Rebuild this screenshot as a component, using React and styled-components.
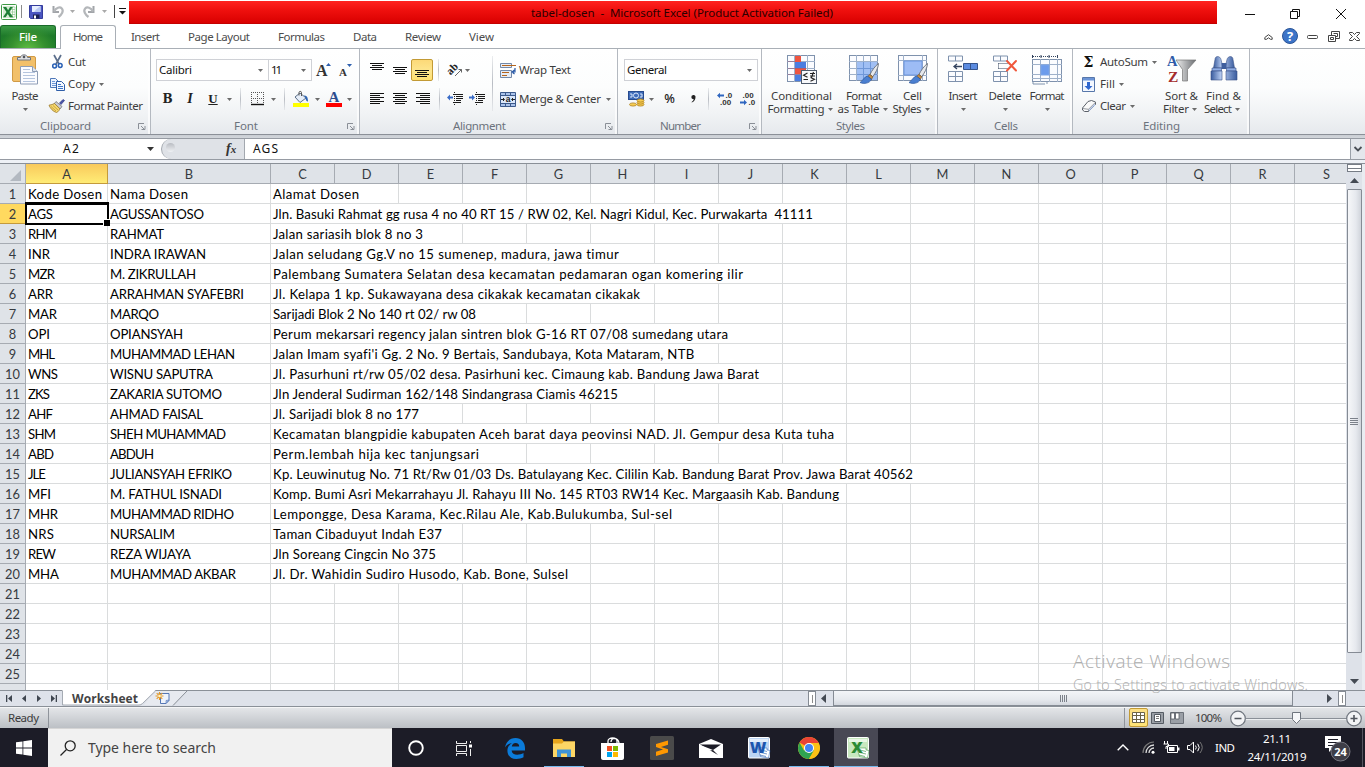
import React, { useLayoutEffect, useRef, useState } from "react";
import styled, { createGlobalStyle, css } from "styled-components";

const UI = `"Noto Sans", "Open Sans", sans-serif`;
const SHEET = `Lato, "Liberation Sans", sans-serif`;

const GlobalStyle = createGlobalStyle`
  * { box-sizing: border-box; }
  body { margin: 0; overflow: hidden; background: #fff; font: 11.5px/16px ${UI}; color: #3c3c3c; }
`;

/* ---------- text set to an exact measure ---------- */

const Measure = styled.span`
  display: block;
  flex: none;
  width: ${(p) => p.$w}px;
  white-space: pre;
  & > span { display: inline-block; }
`;

function Text({ w, children, className }) {
  const ref = useRef(null);
  const [spacing, setSpacing] = useState(0);
  useLayoutEffect(() => {
    const el = ref.current;
    el.style.letterSpacing = "0px";
    const natural = el.getBoundingClientRect().width;
    const next = (w - natural) / Math.max(children.length - 1, 1);
    el.style.letterSpacing = `${next}px`;
    setSpacing(next);
  }, [w, children]);
  return (
    <Measure $w={w} className={className}>
      <span ref={ref} style={{ letterSpacing: `${spacing}px` }}>{children}</span>
    </Measure>
  );
}

/* ---------- shared parts ---------- */

const Icon = styled.svg`
  display: block;
  flex: none;
  overflow: visible;
`;

const Slot = styled.div`
  flex: none;
  width: ${(p) => p.$w}px;
  height: 22px;
  display: flex;
  align-items: center;
  justify-content: center;
`;

const Spacer = styled.div`
  flex: ${(p) => (p.$w ? "none" : "1")};
  width: ${(p) => p.$w || 0}px;
`;

const ArrowBox = styled(Slot)`
  height: auto;
`;

const Arrow = ({ w = 9, color = "#6b6b6b" }) => (
  <ArrowBox $w={w}>
    <Icon width="5" height="3" viewBox="0 0 5 3"><path d="M0 0h5L2.5 3z" fill={color} /></Icon>
  </ArrowBox>
);

const Screen = styled.div`
  width: 1365px;
  height: 767px;
  display: flex;
  flex-direction: column;
  overflow: hidden;
`;

/* ---------- title bar ---------- */

const TitleBar = styled.header`
  display: flex;
  flex: none;
  height: 25px;
`;

const QuickAccess = styled.div`
  display: flex;
  align-items: center;
  width: 129px;
  height: 23px;
`;

const TitleBand = styled.div`
  width: 1088px;
  height: 23px;
  margin-top: 1px;
  padding: 2px 0 0 402px;
  display: flex;
  align-items: center;
  background: linear-gradient(#ff2320, #ee0f0d 45%, #d90000);
  border-bottom: 1px solid #c30000;
  color: #2b0000;
`;

const WindowButtons = styled.div`
  display: flex;
  align-items: center;
  padding-left: 10px;
  padding-top: 3px;
`;

const ThinLine = styled.div`
  flex: none;
  width: 1px;
  height: ${(p) => p.$h}px;
  background: ${(p) => p.$c || "#8b8b8b"};
`;

const ExcelMark = ({ size = 16 }) => (
  <Icon width={size} height={size} viewBox="0 0 16 16">
    <rect x=".5" y=".5" width="15" height="15" rx="1" fill="#fff" stroke="#3f9a45" />
    <path d="M2 2h11v12H2z" fill="#d5ecd2" />
    <path d="M9 3h5v10H9z" fill="#fff" stroke="#8cc58d" strokeWidth=".6" />
    <path d="M9.500 5.500h4.500M9.500 8h4.500M9.500 10.500h4.500M11.500 3v10" stroke="#8cc58d" strokeWidth=".7" />
    <path d="M2 3h3.200l1.900 3.200L9.200 3h2.600L8.400 8l3.700 5.200H8.800L6.800 9.900 4.600 13.200H2L5.500 8z" fill="#1d7f36" />
  </Icon>
);

const SaveIcon = () => (
  <Icon width="14" height="14" viewBox="0 0 14 14">
    <path d="M.5.500h13v13h-12l-1-1z" fill="#4a55c0" stroke="#343c9c" />
    <path d="M3 1h8.500v6H3z" fill="#e8efff" />
    <path d="M7 4.500L11.500 1v6H5z" fill="#b9c9f2" />
    <path d="M4 9.500h6.500v4H4z" fill="#1b2152" />
    <path d="M5 10.500h2v3H5z" fill="#fff" />
  </Icon>
);

const UndoIcon = ({ flip }) => (
  <Icon width="12" height="13" viewBox="0 0 12 13">
    <g transform={flip ? "translate(12 0) scale(-1 1)" : undefined} fill="none">
      <path d="M1.500 1v6h5.500" stroke="#a2a5a9" strokeWidth="2" />
      <path d="M2 6.500C4 2.500 8 1.500 9.800 3.500c2.200 2.500 0 6-3.300 8.500" stroke="#b4b7ba" strokeWidth="2.200" />
    </g>
  </Icon>
);

/* ---------- ribbon tabs ---------- */

const TabStrip = styled.nav`
  flex: none;
  display: flex;
  height: 24px;
  border-bottom: 1px solid #a9afb6;
  color: #4c4c4c;
`;

const FileTab = styled.div`
  width: 56px;
  height: 23px;
  display: flex;
  align-items: center;
  justify-content: center;
  border: 1px solid #1a6a2a;
  border-bottom: 0;
  border-radius: 3px 3px 0 0;
  background: radial-gradient(ellipse at 50% 110%, #62c043 0, #35902f 45%, transparent 75%), linear-gradient(#3c9a45, #1e7a2a 45%, #21802a);
  color: #fff;
  font-weight: 500;
`;

const Tab = styled.div`
  padding: 0 14px;
  display: flex;
  align-items: center;
  height: 23px;
  ${(p) => p.$active && css`
    height: 24px;
    margin: 0 1px 0 4px;
    padding: 0 12px 1px 12px;
    border: 1px solid #a9afb6;
    border-bottom: 0;
    border-radius: 3px 3px 0 0;
    background: #fff;
  `}
`;

const RibbonControls = styled.div`
  margin-left: auto;
  display: flex;
  align-items: center;
`;

/* ---------- ribbon ---------- */

const RibbonBar = styled.section`
  flex: none;
  display: flex;
  height: 85px;
  background: linear-gradient(#fff, #fcfdfd 45%, #f1f3f5 75%, #e6e9ed);
`;

const GroupBox = styled.div`
  flex: none;
  width: ${(p) => p.$w}px;
  display: flex;
  flex-direction: column;
  border-right: 1px solid #b4b9c0;
  box-shadow: inset -2px 0 0 #ffffffaa;
`;

const GroupBody = styled.div`
  height: 69px;
  display: flex;
`;

const Caption = styled.div`
  position: relative;
  height: 16px;
  padding-left: ${(p) => p.$x}px;
  color: #6c727c;
`;

const Launcher = styled.div`
  position: absolute;
  right: 4px;
  top: 5px;
`;

function Group({ w, title, x, tw, launcher, children }) {
  return (
    <GroupBox $w={w}>
      <GroupBody>{children}</GroupBody>
      <Caption $x={x}>
        <Text w={tw}>{title}</Text>
        {launcher && (
          <Launcher>
            <Icon width="8" height="7" viewBox="0 0 8 7">
              <path d="M.5 6V.5H6M3 3l3 3M7 3v3.500H3.500" fill="none" stroke="#8a8f97" />
            </Icon>
          </Launcher>
        )}
      </Caption>
    </GroupBox>
  );
}

const SmallStack = styled.div`
  display: flex;
  flex-direction: column;
  padding-top: 2px;
`;

const SmallButton = styled.div`
  display: flex;
  align-items: center;
  height: 22px;
`;

const BigButton = styled.div`
  flex: none;
  width: ${(p) => p.$w}px;
  display: flex;
  flex-direction: column;
  align-items: center;
  padding-top: 5px;
`;

const BigIcon = styled.div`
  height: 35px;
  padding-top: 1px;
`;

const BigLine = styled.div`
  display: flex;
  align-items: center;
  height: 13px;
  padding-top: 1px;
`;

function Big({ w, icon, line1, w1, line2, w2 }) {
  return (
    <BigButton $w={w}>
      <BigIcon>{icon}</BigIcon>
      <BigLine><Text w={w1}>{line1}</Text></BigLine>
      <BigLine>
        {line2 && <Text w={w2}>{line2}</Text>}
        <Arrow w={line2 ? 11 : 5} />
      </BigLine>
    </BigButton>
  );
}

const ToolRows = styled.div`
  display: flex;
  flex-direction: column;
  padding-top: 10px;
  gap: 7px;
  width: ${(p) => p.$w}px;
`;

const ToolRow = styled.div`
  display: flex;
  align-items: center;
  height: 22px;
  padding-left: ${(p) => p.$pl || 0}px;
`;

const Combo = styled.div`
  width: ${(p) => p.$w}px;
  height: 22px;
  margin-right: -1px;
  padding: 0 3px 0 2px;
  display: flex;
  align-items: center;
  justify-content: space-between;
  border: 1px solid #cfd1d6;
  background: #fff;
  color: #111;
`;

const Letter = styled.span`
  font: ${(p) => p.$f};
  color: ${(p) => p.$c || "#222"};
  text-decoration: ${(p) => (p.$u ? "underline" : "none")};
`;

const Pressed = styled.div`
  width: 22px;
  height: 22px;
  display: flex;
  align-items: flex-end;
  justify-content: center;
  padding-bottom: 3px;
  border: 1px solid #c29a35;
  border-radius: 2px;
  background: linear-gradient(#fcd978, #fde68f 55%, #ffe070);
`;

const FadeLine = styled.div`
  width: 1px;
  height: ${(p) => p.$h || 22}px;
  margin: ${(p) => p.$m || "0"};
  background: linear-gradient(#d9dce080, #b9bdc4 50%, #d9dce080);
`;

/* ---------- ribbon drawings ---------- */

const PasteIcon = () => (
  <Icon width="26" height="30" viewBox="0 0 26 30">
    <rect x=".5" y="1.500" width="23" height="25" rx="1.500" fill="#f2c06a" stroke="#d09a45" />
    <path d="M5.500 5V2.500h3C8.500-1 15.500-1 15.500 2.500h3V5z" fill="#dfe1e4" stroke="#70757c" />
    <circle cx="12" cy="2" r="1.300" fill="#50555c" />
    <path d="M8.500 11.500h12l5 5v12.500h-17z" fill="#fbfcff" stroke="#8e9db5" />
    <path d="M20.500 11.500v5h5" fill="#dde5f1" stroke="#8e9db5" />
    <path d="M11 14.500h7M11 17.500h12M11 20.500h12M11 23.500h12M11 26.500h12" stroke="#b5c5de" />
  </Icon>
);

const CutIcon = () => (
  <Icon width="11" height="14" viewBox="0 0 11 14">
    <path d="M2 0l5 9M9 0L4 9" stroke="#5c6f8c" strokeWidth="1.700" />
    <circle cx="2.600" cy="11" r="1.900" fill="none" stroke="#2a61b5" strokeWidth="1.500" />
    <circle cx="8.200" cy="10.500" r="1.900" fill="none" stroke="#2a61b5" strokeWidth="1.500" />
  </Icon>
);

const CopyIcon = () => (
  <Icon width="15" height="13" viewBox="0 0 15 13">
    <path d="M.5.500h5l3 3v6h-8z" fill="#eef4ff" stroke="#4f78b8" />
    <path d="M2 3.500h3M2 5.500h4M2 7.500h4" stroke="#6d97d6" />
    <path d="M6.500 3.500h5l3 3v6h-8z" fill="#f6f9ff" stroke="#2f5ea8" />
    <path d="M8 6.500h3M8 8.500h5M8 10.500h5" stroke="#3e75c8" />
  </Icon>
);

const PainterIcon = () => (
  <Icon width="16" height="14" viewBox="0 0 16 14">
    <path d="M10.500 4L14 .5l1.500 1L12 5.500z" fill="#4a55a8" stroke="#2d3585" strokeWidth=".7" />
    <path d="M7 2.500l6 5-2 2.500-6-5z" fill="#c9cbd6" stroke="#666" strokeWidth=".7" />
    <path d="M5.500 4.500C4 5.500 2 5.800 0 6.200c1.500 3.500 4 6.300 7.500 7.300 2-.8 3-2.500 3.200-4z" fill="#f5d86e" stroke="#9b7624" strokeWidth=".8" />
    <path d="M2 7.500L7 12M4 6.500l5 4.500" stroke="#b78d2c" strokeWidth=".7" />
  </Icon>
);

const Lines = ({ w, rows, h = 12 }) => (
  <Icon width={w} height={h} viewBox={`0 0 ${w} ${h}`} shapeRendering="crispEdges">
    {rows.map(([x, len], i) => <rect key={i} x={x} y={i * 2} width={len} height="1" fill="#111" />)}
  </Icon>
);

const SHORT = [[0, 14], [2, 10], [0, 14], [2, 10]];

const IndentIcon = ({ out }) => (
  <Icon width="16" height="14" viewBox="0 0 16 14">
    <path d="M6 2.500h10M9 4.500h7M9 6.500h7M9 8.500h5M6 10.500h8" stroke="#1a1a1a" strokeWidth="1" />
    <path d="M7.500 0v14" stroke="#222" strokeDasharray="1 1" />
    {out
      ? <path d="M0 5.500L3 2.500v2h3v2H3v2z" fill="#3a6cc7" />
      : <path d="M6 5.500L3 2.500v2H0v2h3v2z" fill="#3a6cc7" />}
  </Icon>
);

const BordersIcon = () => (
  <Icon width="13" height="14" viewBox="0 0 13 14">
    <path d="M.5 0v12M6.500 0v12M12.500 0v12M0 .5h13M0 6.500h13" stroke="#555" strokeDasharray="1 1" />
    <path d="M0 12.500h13" stroke="#111" strokeWidth="1.400" />
  </Icon>
);

const BucketIcon = () => (
  <Icon width="16" height="16" viewBox="0 0 16 16">
    <path d="M2 6l5-4 6 5-6 4.500z" fill="#e6eef9" stroke="#5c6f88" />
    <path d="M6 4.500V1.500c0-1.500 2.500-1.500 2.500 0V5" fill="none" stroke="#555" />
    <path d="M11 4.500c3 0 4 2 4 6-1.500 0-2.300-1.500-2.500-3.500z" fill="#2f66b5" />
    <rect y="12" width="16" height="4" fill="#ffff00" />
  </Icon>
);

const FontColorIcon = () => (
  <Icon width="16" height="16" viewBox="0 0 16 16">
    <text x="8" y="10.500" textAnchor="middle" fontFamily="Liberation Serif, serif" fontWeight="700" fontSize="15" fill="#2c4d8f">A</text>
    <rect y="12" width="16" height="4" fill="#ff0000" />
  </Icon>
);

const GrowIcon = ({ down }) => (
  <Icon width="16" height="14" viewBox="0 0 16 14">
    <text x="0" y="13" fontFamily="Liberation Serif, serif" fontWeight="700" fontSize={down ? 11 : 16} fill="#333">A</text>
    {down ? <path d="M8 1h5l-2.500 3z" fill="#2d5fae" /> : <path d="M10 3h5l-2.500-3z" fill="#2d5fae" />}
  </Icon>
);

const OrientationIcon = () => (
  <Icon width="15" height="14" viewBox="0 0 15 14">
    <text transform="translate(4 11) rotate(-45)" x="-2" y="0" fontFamily="Liberation Serif, serif" fontWeight="700" fontSize="11" fill="#222">ab</text>
    <path d="M7 13l6.500-6.500M10.500 6.500h3v3" fill="none" stroke="#666" />
  </Icon>
);

const WrapIcon = () => (
  <Icon width="16" height="15" viewBox="0 0 16 15">
    <path d="M.5.500h11v4H.5zM.5 7.500h11v7H.5z" fill="#e7edf6" stroke="#7389a8" />
    <path d="M2 2.500h14" stroke="#b5651d" />
    <path d="M2 9.500h7M2 12.500h5" stroke="#b5651d" />
    <path d="M15 5v4h-2M14.500 7L12 9l2.500 2" fill="none" stroke="#2b5ba8" strokeWidth="1.200" />
  </Icon>
);

const MergeIcon = () => (
  <Icon width="16" height="15" viewBox="0 0 16 15">
    <path d="M.5.500h15v14H.5zM5.500 0v4M10.500 0v4M5.500 11v4M10.500 11v4" fill="#a9c2ea" stroke="#3c5a8c" />
    <rect x="1" y="4" width="14" height="7" fill="#dbe7fa" />
    <path d="M0 3.500h16M0 11.500h16" stroke="#3c5a8c" />
    <path d="M1 7.500h3M12 7.500h3M3 6l1.500 1.500L3 9M13 6l-1.500 1.500L13 9" fill="none" stroke="#222" />
    <text x="8" y="10" textAnchor="middle" fontFamily="Liberation Sans, sans-serif" fontWeight="700" fontSize="8.500" fill="#222">a</text>
  </Icon>
);

const CurrencyIcon = () => (
  <Icon width="17" height="16" viewBox="0 0 17 16">
    <rect x=".5" y=".5" width="15" height="8" fill="#3f6cb9" stroke="#274b8f" />
    <circle cx="8" cy="4.500" r="2.500" fill="none" stroke="#d9e6fb" />
    <path d="M2 3h2v3H2M12 3h2v3h-2" fill="none" stroke="#d9e6fb" />
    <g fill="#f6cc52" stroke="#a67718" strokeWidth=".7">
      <ellipse cx="12.500" cy="13.500" rx="3.500" ry="1.600" /><ellipse cx="12.500" cy="11.500" rx="3.500" ry="1.600" />
      <ellipse cx="12.500" cy="9.500" rx="3.500" ry="1.600" /><ellipse cx="5" cy="13.500" rx="3.500" ry="1.600" />
    </g>
  </Icon>
);

const CommaIcon = () => (
  <Icon width="5" height="8" viewBox="0 0 5 8">
    <path d="M2.200 0a2 2 0 0 1 2.300 2.300C4.500 5 3 6.800.8 7.500L.6 7C2 6.200 2.700 5 2.600 4.100A2.050 2.050 0 0 1 2.200 0z" fill="#222" />
  </Icon>
);

const DecimalIcon = ({ less }) => (
  <Icon width="16" height="14" viewBox="0 0 16 14">
    <g fontFamily="Liberation Sans, sans-serif" fontWeight="700" fontSize="8" fill="#333">
      <text x={less ? 2.500 : 8.500} y="6">{less ? ".00" : ".0"}</text>
      <text x={less ? 8.500 : 3} y="13">{less ? ".0" : ".00"}</text>
    </g>
    {less
      ? <path d="M7 10.500L4 7.800v1.700H0v2h4v1.700z" fill="#2f66c0" />
      : <path d="M0 3.500L3 .8v1.700h4v2H3v1.700z" fill="#2f66c0" />}
  </Icon>
);

const Table = ({ w, h, cols, rows, fill = "#fbfcff", stroke = "#7f92ad" }) => (
  <g>
    <rect x=".5" y=".5" width={w - 1} height={h - 1} fill={fill} stroke={stroke} />
    {cols.map((x) => <path key={`c${x}`} d={`M${x}.5 0v${h}`} stroke="#9fb1ca" />)}
    {rows.map((y) => <path key={`r${y}`} d={`M0 ${y}.5h${w}`} stroke="#9fb1ca" />)}
  </g>
);

const Brush = () => (
  <g>
    <path d="M29.500 8.500c-3 2-7 7.500-8.500 11l2.800 2.200c2.500-3.500 5.500-8.500 5.700-13.200z" fill="#e6e8ec" stroke="#666d76" strokeWidth=".9" />
    <path d="M20.800 19.500l3 2.200-1.500 3-4-3z" fill="#c28a44" stroke="#7a5320" strokeWidth=".7" />
    <path d="M18.500 21c-3 .5-3.500 3.500-7.500 6.500 4 1.800 9.500 1 11.500-3.200z" fill="#4a7fd0" stroke="#27539b" strokeWidth=".7" />
  </g>
);

const ConditionalIcon = () => (
  <Icon width="30" height="30" viewBox="0 0 30 30">
    <Table w={28} h={27} cols={[7, 13, 20]} rows={[6, 13, 19]} />
    <path d="M8 1h6v6H8zM8 13h11v6H8z" fill="#ee5440" />
    <path d="M8 7h11v6H8zM8 20h6v6H8z" fill="#4b7de0" />
    <path d="M.5 6.500H8M.5 13.500H19M.5 19.500H19" stroke="#8f5f7d" strokeWidth=".6" />
    <rect x="14.500" y="15.500" width="15" height="13" fill="#f7f8fa" stroke="#4e5a6b" />
    <path d="M20.500 18l-4 2.200 4 2M16.500 24.500h4.500M23 18.500h5M23 21h5M26.500 17l-2 5.500M23.500 22.500l4 1.700-4 2" fill="none" stroke="#222" strokeWidth="1.100" />
  </Icon>
);

const TableFormatIcon = () => (
  <Icon width="30" height="30" viewBox="0 0 30 30">
    <Table w={29} h={26} cols={[7, 14, 21]} rows={[6, 13, 19]} />
    <rect x="8" y="7" width="20" height="18" fill="#8fb4f2" opacity=".85" />
    <path d="M14.500 7v18M21.500 7v18M8 13.500h20M8 19.500h20" stroke="#6f97d8" />
    <Brush />
  </Icon>
);

const CellStylesIcon = () => (
  <Icon width="30" height="30" viewBox="0 0 30 30">
    <Table w={29} h={26} cols={[5, 24]} rows={[5, 20]} />
    <rect x="6" y="6" width="18" height="14" fill="#9dbcf5" stroke="#6a94dd" />
    <Brush />
  </Icon>
);

const InsertIcon = () => (
  <Icon width="30" height="30" viewBox="0 0 30 30">
    <path d="M.5 1h14v5H.5zM7.500 1v5M.5 16.500h14v10H.5zM7.500 16.500v10M.5 21.500h14" fill="#fbfcff" stroke="#7f92ad" />
    <path d="M15.500 8.500h14v6h-14z" fill="#5b8be0" stroke="#35548c" />
    <path d="M22.500 8.500v6" stroke="#35548c" />
    <path d="M6 11.500h8M9 9l-3 2.500L9 14" fill="none" stroke="#34445f" strokeWidth="1.300" />
  </Icon>
);

const DeleteIcon = () => (
  <Icon width="25" height="30" viewBox="0 0 25 30">
    <path d="M.5 1h14v5H.5zM7.500 1v5M.5 16.500h14v10H.5zM7.500 16.500v10M.5 21.500h14" fill="#fbfcff" stroke="#7f92ad" />
    <path d="M5.500 8.500h10M5.500 13.500h10M5.500 8.500v5" stroke="#34445f" strokeDasharray="1 1" />
    <path d="M14 6l9 9.500M23 6l-9 9.500" stroke="#f0573b" strokeWidth="2" strokeLinecap="round" />
  </Icon>
);

const FormatIcon = () => (
  <Icon width="30" height="30" viewBox="0 0 30 30">
    <path d="M.5 0v3M25.500 0v3M9 0v3M17 0v3" stroke="#34445f" /><path d="M1 1.500h25" stroke="#34445f" strokeDasharray="1 1" />
    <g transform="translate(0 4)"><Table w={30} h={23} cols={[8, 17, 25]} rows={[5, 15, 19]} /></g>
    <rect x="9" y="10" width="8" height="10" fill="#6d9cec" stroke="#7aa4e8" />
    <path d="M1 27v2h12M15 27v2" fill="none" stroke="#7f92ad" />
  </Icon>
);

const FillIcon = () => (
  <Icon width="13" height="15" viewBox="0 0 13 15">
    <path d="M.5.500h12v14H.5z" fill="#f4f8ff" stroke="#5777aa" />
    <path d="M1 1h11v2.500H1z" fill="#6b94d6" />
    <path d="M5 5h3v4h2.500l-4 4-4-4H5z" fill="#2f67cf" />
  </Icon>
);

const EraserIcon = () => (
  <Icon width="14" height="12" viewBox="0 0 14 12">
    <path d="M6 1.500L9.500.5l4 1.500v2.500L6.500 11.500h-4L.5 10V8z" fill="#fafafa" stroke="#5b6069" />
    <path d="M.5 8.500l6 .8 7-7M6.500 9.500v2" fill="none" stroke="#7b818a" strokeWidth=".8" />
    <path d="M7 9.700l6-6v1.500l-6 6z" fill="#a9bfe6" />
  </Icon>
);

const SortIcon = () => (
  <Icon width="29" height="30" viewBox="0 0 29 30">
    <defs><linearGradient id="funnel"><stop offset="0" stopColor="#eee" /><stop offset="1" stopColor="#6b6e72" /></linearGradient></defs>
    <path d="M9 5h20l-8.500 9.500V26h-5V14.500z" fill="url(#funnel)" stroke="#777" strokeWidth=".7" />
    <text x="0" y="10.500" fontFamily="Liberation Serif, serif" fontWeight="700" fontSize="14.500" fill="#2f5ba8">A</text>
    <text x="1" y="27" fontFamily="Liberation Serif, serif" fontWeight="700" fontSize="15.500" fill="#a52d2d">Z</text>
  </Icon>
);

const FindIcon = () => (
  <Icon width="28" height="30" viewBox="0 0 28 30">
    <defs><linearGradient id="tube"><stop offset="0" stopColor="#3a5c9e" /><stop offset=".4" stopColor="#b9cef3" /><stop offset="1" stopColor="#3a5c9e" /></linearGradient></defs>
    <path d="M5 4.500c0-4 5-4 6 0l2 8.500H3.500zM23 4.500c0-4-5-4-6 0L15 13h9.500z" fill="url(#tube)" stroke="#3b5387" strokeWidth=".6" />
    <path d="M11.500 8h5v6h-5z" fill="#3f5f9e" />
    <path d="M2 13h9.500v3H2zM16.500 13H26v3h-9.500z" fill="#8fadE4" stroke="#3b5387" strokeWidth=".6" />
    <path d="M1 16h11v9H1zM16 16h11v9H16z" fill="url(#tube)" stroke="#3b5387" strokeWidth=".6" />
  </Icon>
);

/* ---------- formula bar ---------- */

const FormulaArea = styled.section`
  flex: none;
  height: 29px;
  border-top: 1px solid #8b9098;
  padding-top: 3px;
  background: linear-gradient(#c9cdd3, #d5d9de 4px, #eef1f6 24px);
`;

const FormulaRow = styled.div`
  display: flex;
  height: 22px;
  border-top: 1px solid #969ba3;
  border-bottom: 1px solid #969ba3;
  background: #fff;
  color: #111;
  font-size: 12px;
`;

const NameBox = styled.div`
  width: 161px;
  display: flex;
  align-items: center;
  padding-left: 63px;
`;

const FxArea = styled.div`
  width: 84px;
  display: flex;
  align-items: center;
  border: 1px solid #a3a8af;
  border-width: 0 1px;
  border-radius: 11px 0 0 11px;
  background: #dfe2e7;
`;

const FxKnob = styled.div`
  width: 9px;
  height: 9px;
  margin-left: 4px;
  margin-bottom: 3px;
  border-radius: 50%;
  background: linear-gradient(#b9bcc2, #eff1f4);
`;

const FxLetter = styled.span`
  margin-left: 51px;
  font: italic 700 14px/18px "Liberation Serif", serif;
  color: #333;
  & > small { font-size: 11px; }
`;

const FormulaInput = styled.div`
  flex: 1;
  display: flex;
  align-items: center;
  padding-left: 8px;
`;

const ExpandButton = styled.div`
  width: 15px;
  display: flex;
  align-items: center;
  justify-content: center;
  border-left: 1px solid #9aa0a8;
  background: #e4e7ec;
`;

/* ---------- sheet ---------- */

const SheetArea = styled.main`
  position: relative;
  flex: none;
  display: flex;
  height: 527px;
  border-top: 1px solid #8a9098;
`;

const Grid = styled.div`
  position: relative;
  width: 1346px;
  height: 526px;
  overflow: hidden;
  font: 13.200px/19px ${SHEET};
  color: #000;
`;

const SheetRow = styled.div`
  display: flex;
  height: 20px;
  width: 1500px;
`;

const Head = styled.div`
  flex: none;
  width: ${(p) => p.$w}px;
  height: 20px;
  padding-top: 1px;
  font-size: 12.800px;
  text-align: center;
  color: #363a40;
  background: ${(p) => (p.$on ? (p.$row ? "#ffd95f" : "linear-gradient(#f9c95c, #ffec76)") : "#dfe3e8")};
  border-right: 1px solid ${(p) => (p.$on ? "#c49a3c" : "#a6abb2")};
  border-bottom: 1px solid ${(p) => (p.$on ? "#c49a3c" : "#a6abb2")};
`;

const Cell = styled.div`
  flex: none;
  width: ${(p) => p.$w}px;
  height: 20px;
  padding: 1px 0 0 2px;
  border-right: 1px solid #dadcdd;
  border-bottom: 1px solid #dadcdd;
`;

const Selection = styled.div`
  position: absolute;
  left: 25px;
  top: 38px;
  width: 84px;
  height: 23px;
  border: 2px solid #000;
  border-top-width: 3px;
  &::after {
    content: "";
    position: absolute;
    right: -3px;
    bottom: -3px;
    width: 6px;
    height: 6px;
    background: #000;
    border: solid #fff;
    border-width: 1px 0 0 1px;
  }
`;

const VScroll = styled.div`
  width: 19px;
  display: flex;
  flex-direction: column;
  align-items: center;
  background: #dee2e9;
  border-right: 3px solid #e9ecf1;
`;

const VSplit = styled.div`
  width: 15px;
  height: 8px;
  border: 1px solid #767c85;
  background: linear-gradient(#fff 3px, #767c85 3px, #767c85 4px, #fff 4px);
`;

const ScrollButton = styled.div`
  height: ${(p) => p.$h}px;
  width: ${(p) => p.$w || 15}px;
  display: flex;
  align-items: center;
  justify-content: center;
`;

const VThumb = styled.div`
  width: 15px;
  height: 464px;
  display: flex;
  align-items: center;
  justify-content: center;
  border: 1px solid #858b94;
  border-radius: 1px;
  background: linear-gradient(90deg, #f6f7f9, #e6e9ee 60%, #d0d4db);
`;

const Watermark = styled.div`
  position: absolute;
  left: 1073px;
  top: 485px;
  z-index: 2;
  color: #b9b9b9;
  font-family: "Open Sans", sans-serif;
  font-weight: 300;
`;

const WatermarkTitle = styled.div`
  font-size: 19px;
  line-height: 25px;
  color: #adadad;
`;

const WatermarkNote = styled.div`
  font-size: 14.300px;
  line-height: 21px;
  color: #adadad;
`;

/* ---------- sheet tabs and status ---------- */

const SheetTabs = styled.footer`
  flex: none;
  height: 17px;
  display: flex;
  border-top: 1px solid #8a9098;
  border-bottom: 1px solid #8a9098;
  background: #dee2ea;
`;

const TabDrawing = styled.div`
  position: relative;
  width: 746px;
`;

const TabShape = styled(Icon)`
  position: absolute;
  left: 0;
  top: -1px;
`;

const TabLabel = styled.div`
  position: absolute;
  left: 10px;
  top: 0;
  font: 700 12px/16px "Open Sans", sans-serif;
  color: #444;
`;

const SheetNav = styled.div`
  width: 62px;
  padding-left: 6px;
  display: flex;
  align-items: center;
  gap: 8px;
`;

const HSplit = styled.div`
  width: 8px;
  height: 15px;
  display: flex;
  align-items: center;
  justify-content: center;
  border: 1px solid #858b94;
  background: #fff;
`;

const HThumb = styled.div`
  width: 460px;
  height: 15px;
  display: flex;
  align-items: center;
  justify-content: center;
  border: solid #858b94;
  border-width: 0 1px 1px;
  background: linear-gradient(#f3f5f8, #e6e9ee 60%, #d3d7de);
`;

const StatusBar = styled.div`
  flex: none;
  height: 21px;
  display: flex;
  align-items: center;
  padding-right: 2px;
  border-top: 1px solid #f5f6f7;
  background: linear-gradient(#e3e5e8, #d0d3d7 50%, #bcc0c5);
`;

const StatusItems = styled.div`
  display: flex;
  align-items: center;
  height: 20px;
  padding-bottom: 1px;
`;

const ReadyBox = styled.div`
  width: 49px;
  height: 20px;
  display: flex;
  align-items: center;
  padding: 0 0 1px 8px;
  border-right: 1px solid #8f949b;
`;

const ViewButton = styled.div`
  width: 19px;
  height: 19px;
  display: flex;
  align-items: center;
  justify-content: center;
  ${(p) => p.$on && css`
    border: 1px solid #c29a35;
    border-radius: 2px;
    background: linear-gradient(#fcdf86, #ffe476);
  `}
`;

/* ---------- taskbar ---------- */

const Taskbar = styled.div`
  flex: none;
  height: 39px;
  display: flex;
  background: #1c1c27;
  color: #fff;
`;

const StartButton = styled.div`
  width: 48px;
  display: flex;
  align-items: center;
  justify-content: center;
  padding-top: 1px;
`;

const SearchBox = styled.div`
  width: 344px;
  display: flex;
  align-items: center;
  padding-left: 12px;
  gap: 12px;
  border-top: 1px solid #d5d5d5;
  background: #f1f1f1;
  color: #444;
  font-size: 14px;
  line-height: 20px;
`;

const TaskItem = styled.div`
  width: 49px;
  display: flex;
  align-items: center;
  justify-content: center;
  padding: 1px ${(p) => p.$nudge || 0}px 0 0;
  ${(p) => p.$open && css`
    background: linear-gradient(#76b9ed, #76b9ed) 50% 100% / 40px 1px no-repeat;
  `}
  ${(p) => p.$active && css`
    width: 44px;
    margin-left: 1px;
    padding-left: 3px;
    border-bottom: 1px solid #76b9ed;
    background: #484854;
  `}
`;

const Tray = styled.div`
  margin-left: auto;
  display: flex;
  align-items: center;
  width: 250px;
`;

const Clock = styled.div`
  width: 60px;
  display: flex;
  flex-direction: column;
  align-items: center;
  line-height: 18px;
`;

const ShowDesktop = styled.div`
  margin-left: auto;
  margin-right: 2px;
  width: 1px;
  height: 39px;
  background: #55555f;
`;

const EdgeIcon = () => (
  <Icon width="20" height="21" viewBox="0 0 20 21">
    <path d="M0 9.500C1 3.500 5 0 10.500 0 16.500 0 20 4.500 20 10v2.400H6.600c.3 3 2.700 4.300 5.600 4.300 2.400 0 4.500-.6 6.300-1.700v4.300C16.500 20.400 14 21 11.300 21 6 21 2.400 17.700 2.400 12.700c0-3.300 1.800-6.200 4.900-7.700C3.900 5.300 1.500 7 0 9.500zM6.800 8.500h7.400c0-2.200-1.300-3.600-3.500-3.600-2.300 0-3.700 1.600-3.900 3.600z" fill="#0b7bd9" />
  </Icon>
);

const FolderIcon = () => (
  <Icon width="22" height="19" viewBox="0 0 22 19">
    <path d="M0 0h9l2 2.500h11V17H0z" fill="#e7a51c" /><path d="M0 4.500h9l2-2h11V18H0z" fill="#fdd665" />
    <path d="M4 10.500h14V18h-4v-3.500H8V18H4z" fill="#3e93d6" />
  </Icon>
);

const StoreIcon = () => (
  <Icon width="23" height="23" viewBox="0 0 23 23">
    <path d="M7 7V4c0-4 9-4 9 0v3M10 5c0-5 7-5 8 1" fill="none" stroke="#fff" strokeWidth="1.300" />
    <path d="M0 6h23v15c0 1-1 2-2 2H2c-1 0-2-1-2-2z" fill="#fff" />
    <path d="M6 9h5v5H6z" fill="#f25022" /><path d="M12 9h5v5h-5z" fill="#7fba00" />
    <path d="M6 15h5v5H6z" fill="#00a4ef" /><path d="M12 15h5v5h-5z" fill="#ffb900" />
  </Icon>
);

const SublimeIcon = () => (
  <Icon width="24" height="24" viewBox="0 0 24 24">
    <rect width="24" height="24" rx="1.500" fill="#4a4a4a" />
    <path d="M18 4.500v4.200l-7 2.300 7 2.300v3.200L6 20v-4.200l7-2.200-7-2.500V8z" fill="#ff9800" />
  </Icon>
);

const MailIcon = () => (
  <Icon width="24" height="19" viewBox="0 0 24 19">
    <path d="M0 5l12-5 12 5v14H0z" fill="#fff" /><path d="M1 5.500h21l-8 5.500 5 5z" fill="#1c1c27" /><path d="M0 5.500l14 5.500L0 14z" fill="#fff" />
  </Icon>
);

const OfficeIcon = ({ letter, color, tint }) => (
  <Icon width="22" height="22" viewBox="0 0 22 22">
    <rect x=".5" y=".5" width="21" height="20.500" rx="1" fill={tint} stroke="#fff" />
    <path d="M2 2h18v3H2z" fill="#fff" opacity=".6" />
    <path d="M10 11h9v2l3 .5-1.500 7.500-8-1.500z" fill="#fff" stroke={color} strokeWidth=".5" />
    <path d="M13 13l6 1.500M12.500 15.500l6.500 1.500M12 18l6 1.500" stroke={color} strokeWidth=".6" />
    <text x="10" y="15.500" textAnchor="middle" fontFamily="Open Sans, sans-serif" fontWeight="800" fontSize="16" fill={color}>{letter}</text>
  </Icon>
);

const ChromeIcon = () => (
  <Icon width="22" height="22" viewBox="0 0 22 22">
    <circle cx="11" cy="11" r="11" fill="#fbc116" />
    <path d="M11 11L1.500 5.500A11 11 0 0 1 20.500 5.500L20.600 6H11z" fill="#ea4335" />
    <path d="M1.500 5.500A11 11 0 0 0 11 22l5-8.500L11 11 6 13.500z" fill="#2fa351" />
    <path d="M20.500 6H11l5 7.500L11 22A11 11 0 0 0 20.500 6z" fill="#fbc116" />
    <circle cx="11" cy="11" r="5" fill="#fff" /><circle cx="11" cy="11" r="4" fill="#4285f4" />
  </Icon>
);

/* ---------- data ---------- */

const COLUMNS = ["C", "D", "E", "F", "G", "H", "I", "J", "K", "L", "M", "N", "O", "P", "Q", "R", "S"];

const ROWS = [
  ["Kode Dosen", 74, "Nama Dosen", 78, "Alamat Dosen", 86],
  ["AGS", 25, "AGUSSANTOSO", 94, "Jln. Basuki Rahmat gg rusa 4 no 40 RT 15 / RW 02, Kel. Nagri Kidul, Kec. Purwakarta  41111", 540],
  ["RHM", 29, "RAHMAT", 54, "Jalan sariasih blok 8 no 3", 150],
  ["INR", 22, "INDRA IRAWAN", 96, "Jalan seludang Gg.V no 15 sumenep, madura, jawa timur", 346],
  ["MZR", 27, "M. ZIKRULLAH", 86, "Palembang Sumatera Selatan desa kecamatan pedamaran ogan komering ilir", 470],
  ["ARR", 25, "ARRAHMAN SYAFEBRI", 134, "Jl. Kelapa 1 kp. Sukawayana desa cikakak kecamatan cikakak", 367],
  ["MAR", 29, "MARQO", 49, "Sarijadi Blok 2 No 140 rt 02/ rw 08", 203],
  ["OPI", 22, "OPIANSYAH", 73, "Perum mekarsari regency jalan sintren blok G-16 RT 07/08 sumedang utara", 455],
  ["MHL", 27, "MUHAMMAD LEHAN", 125, "Jalan Imam syafi'i Gg. 2 No. 9 Bertais, Sandubaya, Kota Mataram, NTB", 421],
  ["WNS", 30, "WISNU SAPUTRA", 103, "Jl. Pasurhuni rt/rw 05/02 desa. Pasirhuni kec. Cimaung kab. Bandung Jawa Barat", 486],
  ["ZKS", 22, "ZAKARIA SUTOMO", 112, "Jln Jenderal Sudirman 162/148 Sindangrasa Ciamis 46215", 345],
  ["AHF", 25, "AHMAD FAISAL", 93, "Jl. Sarijadi blok 8 no 177", 146],
  ["SHM", 28, "SHEH MUHAMMAD", 116, "Kecamatan blangpidie kabupaten Aceh barat daya peovinsi NAD. Jl. Gempur desa Kuta tuha", 561],
  ["ABD", 26, "ABDUH", 44, "Perm.lembah hija kec tanjungsari", 206],
  ["JLE", 18, "JULIANSYAH EFRIKO", 122, "Kp. Leuwinutug No. 71 Rt/Rw 01/03 Ds. Batulayang Kec. Cililin Kab. Bandung Barat Prov. Jawa Barat 40562", 640],
  ["MFI", 23, "M. FATHUL ISNADI", 112, "Komp. Bumi Asri Mekarrahayu Jl. Rahayu III No. 145 RT03 RW14 Kec. Margaasih Kab. Bandung", 566],
  ["MHR", 30, "MUHAMMAD RIDHO", 124, "Lempongge, Desa Karama, Kec.Rilau Ale, Kab.Bulukumba, Sul-sel", 399],
  ["NRS", 26, "NURSALIM", 65, "Taman Cibaduyut Indah E37", 169],
  ["REW", 28, "REZA WIJAYA", 81, "Jln Soreang Cingcin No 375", 163],
  ["MHA", 31, "MUHAMMAD AKBAR", 126, "Jl. Dr. Wahidin Sudiro Husodo, Kab. Bone, Sulsel", 295],
];

const TOTAL_ROWS = 25;

const TABS = [["Insert", 29], ["Page Layout", 62], ["Formulas", 47], ["Data", 24], ["Review", 36], ["View", 25]];

function DataRow({ index }) {
  const row = ROWS[index];
  const span = row ? Math.ceil((row[5] + 2) / 64) : 1;
  return (
    <SheetRow>
      <Head $w={26} $on={index === 1} $row>{index < TOTAL_ROWS ? index + 1 : null}</Head>
      <Cell $w={82}>{row && <Text w={row[1]}>{row[0]}</Text>}</Cell>
      <Cell $w={163}>{row && <Text w={row[3]}>{row[2]}</Text>}</Cell>
      <Cell $w={64 * span}>{row && <Text w={row[5]}>{row[4]}</Text>}</Cell>
      {COLUMNS.slice(span).map((c) => <Cell key={c} $w={64} />)}
    </SheetRow>
  );
}

const NavArrow = ({ d }) => (
  <Icon width="7" height="7" viewBox="0 0 7 7"><path d={d} fill="#3f4650" /></Icon>
);

export default function App() {
  return (
    <Screen>
      <GlobalStyle />
      <TitleBar>
        <QuickAccess>
          <Spacer $w={1} /><ExcelMark />
          <Spacer $w={4} /><ThinLine $h={13} /><Spacer $w={7} />
          <SaveIcon /><Spacer $w={9} />
          <UndoIcon /><Spacer $w={3} /><Arrow w={11} color="#a9a9a9" /><Spacer $w={5} />
          <UndoIcon flip /><Spacer $w={4} /><Arrow w={11} color="#a9a9a9" /><Spacer $w={4} />
          <ThinLine $h={13} $c="#444" /><Spacer $w={4} />
          <Icon width="7" height="7" viewBox="0 0 7 7"><path d="M0 .5h7" stroke="#111" /><path d="M0 3h7L3.500 6.500z" fill="#111" /></Icon>
        </QuickAccess>
        <TitleBand><Text w={302}>{"tabel-dosen  -  Microsoft Excel (Product Activation Failed)"}</Text></TitleBand>
        <WindowButtons>
          <Slot $w={46}><Icon width="10" height="10" viewBox="0 0 10 10"><path d="M0 5.500h10" stroke="#111" /></Icon></Slot>
          <Slot $w={44}><Icon width="10" height="10" viewBox="0 0 10 10"><path d="M.5 2.500h7v7h-7zM2.500 2.500v-2h7v7h-2" fill="none" stroke="#111" /></Icon></Slot>
          <Slot $w={48}><Icon width="10" height="10" viewBox="0 0 10 10"><path d="M0 0l10 10M10 0L0 10" stroke="#111" /></Icon></Slot>
        </WindowButtons>
      </TitleBar>

      <TabStrip>
        <FileTab><Text w={18}>File</Text></FileTab>
        <Tab $active><Text w={30}>Home</Text></Tab>
        {TABS.map(([name, w]) => <Tab key={name}><Text w={w}>{name}</Text></Tab>)}
        <RibbonControls>
          <Slot $w={20}><Icon width="9" height="6" viewBox="0 0 9 6"><path d="M.8 3.500L4.500.7l3.700 2.800v1.800h-1.700l-2-1.500-2 1.500H.8z" fill="none" stroke="#444" /></Icon></Slot>
          <Slot $w={23}>
            <Icon width="16" height="16" viewBox="0 0 16 16">
              <circle cx="8" cy="7" r="7.500" fill="#3c74c8" stroke="#2b5597" />
              <text x="8" y="11.500" textAnchor="middle" fontFamily="Open Sans, sans-serif" fontWeight="700" fontSize="13" fill="#fff">?</text>
            </Icon>
          </Slot>
          <Slot $w={22}><Icon width="11" height="4" viewBox="0 0 11 4"><rect x=".5" y=".5" width="10" height="3" rx="1" fill="none" stroke="#444" /></Icon></Slot>
          <Slot $w={21}><Icon width="12" height="11" viewBox="0 0 12 11"><path d="M.5 4.500h7v6h-7zM3.500 4.500v-4h8v7h-4M2.500 6.500h3v2h-3zM5.500 2.500h4v3h-2" fill="none" stroke="#444" /></Icon></Slot>
          <Slot $w={21}><Icon width="11" height="9" viewBox="0 0 11 9"><path d="M.5.500h3l2 2 2-2h3v1l-3 3 3 3v1h-3l-2-2-2 2h-3v-1l3-3-3-3z" fill="none" stroke="#444" /></Icon></Slot>
        </RibbonControls>
      </TabStrip>

      <RibbonBar>
        <Group w={151} title="Clipboard" x={40} tw={51} launcher>
          <Spacer $w={1} />
          <Big w={48} icon={<PasteIcon />} line1="Paste" w1={27} />
          <SmallStack>
            <SmallButton><Slot $w={16}><CutIcon /></Slot><Spacer $w={3} /><Text w={18}>Cut</Text></SmallButton>
            <SmallButton><Slot $w={16}><CopyIcon /></Slot><Spacer $w={3} /><Text w={27}>Copy</Text><Arrow w={12} /></SmallButton>
            <SmallButton><Slot $w={16}><PainterIcon /></Slot><Spacer $w={3} /><Text w={75}>Format Painter</Text></SmallButton>
          </SmallStack>
        </Group>

        <Group w={209} title="Font" x={83} tw={24} launcher>
          <ToolRows $w={208}>
            <ToolRow $pl={5}>
              <Combo $w={113}><Text w={33}>Calibri</Text><Arrow w={9} /></Combo>
              <Combo $w={44}><Text w={11}>11</Text><Arrow w={9} /></Combo>
              <Spacer $w={5} /><GrowIcon /><Spacer $w={7} /><GrowIcon down />
            </ToolRow>
            <ToolRow $pl={5}>
              <Slot $w={23}><Letter $f={`700 12px/16px "DejaVu Serif", serif`}>B</Letter></Slot>
              <Slot $w={22}><Letter $f={`italic 700 14px/16px "Liberation Serif", serif`}>I</Letter></Slot>
              <Slot $w={24}><Letter $u $f={`700 13px/16px "Liberation Serif", serif`}>U</Letter></Slot>
              <Arrow w={9} />
              <Slot $w={13}><FadeLine /></Slot>
              <Slot $w={21}><BordersIcon /></Slot>
              <Arrow w={11} />
              <Slot $w={11}><FadeLine /></Slot>
              <Slot $w={22}><BucketIcon /></Slot>
              <Arrow w={10} />
              <Slot $w={23}><FontColorIcon /></Slot>
              <Arrow w={9} />
            </ToolRow>
          </ToolRows>
        </Group>

        <Group w={258} title="Alignment" x={93} tw={53} launcher>
          <ToolRows $w={132}>
            <ToolRow $pl={5}>
              <Slot $w={23}><Lines w={14} h={14} rows={SHORT} /></Slot>
              <Slot $w={23}><Lines w={14} h={7} rows={SHORT} /></Slot>
              <Pressed><Lines w={14} h={7} rows={SHORT} /></Pressed>
              <Slot $w={11}><FadeLine /></Slot>
              <Spacer $w={4} />
              <OrientationIcon /><Arrow w={9} />
            </ToolRow>
            <ToolRow $pl={5}>
              <Slot $w={23}><Lines w={14} rows={[[0, 14], [0, 10], [0, 14], [0, 10], [0, 14], [0, 10]]} /></Slot>
              <Slot $w={23}><Lines w={14} rows={[[0, 14], [2, 10], [0, 14], [2, 10], [0, 14], [2, 10]]} /></Slot>
              <Slot $w={23}><Lines w={14} rows={[[0, 14], [4, 10], [0, 14], [4, 10], [0, 14], [4, 10]]} /></Slot>
              <Slot $w={10}><FadeLine /></Slot>
              <Slot $w={22}><IndentIcon out /></Slot>
              <Slot $w={22}><IndentIcon /></Slot>
            </ToolRow>
          </ToolRows>
          <FadeLine $h={55} $m="7px 7px 0 0" />
          <ToolRows $w={115}>
            <ToolRow><WrapIcon /><Spacer $w={3} /><Text w={52}>Wrap Text</Text></ToolRow>
            <ToolRow><MergeIcon /><Spacer $w={3} /><Text w={82}>{"Merge & Center"}</Text><Arrow w={14} /></ToolRow>
          </ToolRows>
        </Group>

        <Group w={144} title="Number" x={42} tw={41} launcher>
          <ToolRows $w={143}>
            <ToolRow $pl={6}><Combo $w={134}><Text w={40}>General</Text><Arrow w={9} /></Combo></ToolRow>
            <ToolRow $pl={9}>
              <Slot $w={19}><CurrencyIcon /></Slot>
              <Arrow w={11} />
              <Slot $w={25}><Letter $f={`500 12.500px/16px ${UI}`}>%</Letter></Slot>
              <Slot $w={23}><CommaIcon /></Slot>
              <Slot $w={7}><FadeLine /></Slot>
              <Slot $w={26}><DecimalIcon /></Slot>
              <Slot $w={20}><DecimalIcon less /></Slot>
            </ToolRow>
          </ToolRows>
        </Group>

        <Group w={176} title="Styles" x={74} tw={29}>
          <Spacer $w={4} />
          <Big w={71} icon={<ConditionalIcon />} line1="Conditional" w1={61} line2="Formatting" w2={57} />
          <Big w={54} icon={<TableFormatIcon />} line1="Format" w1={36} line2="as Table" w2={42} />
          <Big w={43} icon={<CellStylesIcon />} line1="Cell" w1={19} line2="Styles" w2={29} />
        </Group>

        <Group w={135} title="Cells" x={56} tw={24}>
          <Spacer $w={4} />
          <Big w={42} icon={<InsertIcon />} line1="Insert" w1={29} />
          <Big w={42} icon={<DeleteIcon />} line1="Delete" w1={33} />
          <Big w={42} icon={<FormatIcon />} line1="Format" w1={35} />
        </Group>

        <Group w={177} title="Editing" x={70} tw={37}>
          <Spacer $w={7} />
          <SmallStack>
            <SmallButton><Slot $w={17}><Letter $c="#111" $f={`700 14px/16px "DejaVu Serif", serif`}>Σ</Letter></Slot><Spacer $w={3} /><Text w={48}>AutoSum</Text><Arrow w={13} /></SmallButton>
            <SmallButton><Slot $w={17}><FillIcon /></Slot><Spacer $w={3} /><Text w={15}>Fill</Text><Arrow w={12} /></SmallButton>
            <SmallButton><Slot $w={17}><EraserIcon /></Slot><Spacer $w={3} /><Text w={26}>Clear</Text><Arrow w={12} /></SmallButton>
          </SmallStack>
          <Big w={41} icon={<SortIcon />} line1="Sort &" w1={33} line2="Filter" w2={26} />
          <Big w={43} icon={<FindIcon />} line1="Find &" w1={35} line2="Select" w2={28} />
        </Group>
      </RibbonBar>

      <FormulaArea>
        <FormulaRow>
          <NameBox>
            <Text w={16}>A2</Text><Spacer $w={68} />
            <Icon width="7" height="4" viewBox="0 0 7 4"><path d="M0 0h7L3.500 4z" fill="#333" /></Icon>
          </NameBox>
          <FxArea><FxKnob /><FxLetter>f<small>x</small></FxLetter></FxArea>
          <FormulaInput><Text w={25}>AGS</Text></FormulaInput>
          <ExpandButton>
            <Icon width="8" height="6" viewBox="0 0 8 6"><path d="M.5 1L4 4.500 7.500 1" fill="none" stroke="#4a4f57" strokeWidth="1.800" /></Icon>
          </ExpandButton>
        </FormulaRow>
      </FormulaArea>

      <SheetArea>
        <Grid>
          <SheetRow>
            <Head $w={26}><Icon width="24" height="18" viewBox="0 0 24 18"><path d="M21 5v11H10z" fill="#b3b9c1" /></Icon></Head>
            <Head $w={82} $on>A</Head>
            <Head $w={163}>B</Head>
            {COLUMNS.map((c) => <Head key={c} $w={64}>{c}</Head>)}
          </SheetRow>
          {Array.from({ length: TOTAL_ROWS + 1 }, (_, i) => <DataRow key={i} index={i} />)}
          <Selection />
        </Grid>
        <VScroll>
          <VSplit />
          <ScrollButton $h={17}><Icon width="9" height="5" viewBox="0 0 9 5"><path d="M0 5h9L4.500 0z" fill="#444a53" /></Icon></ScrollButton>
          <VThumb><Icon width="8" height="7" viewBox="0 0 8 7"><path d="M0 .5h8M0 2.500h8M0 4.500h8M0 6.500h8" stroke="#7b818a" /></Icon></VThumb>
          <Spacer />
          <ScrollButton $h={17}><Icon width="9" height="5" viewBox="0 0 9 5"><path d="M0 0h9L4.500 5z" fill="#444a53" /></Icon></ScrollButton>
        </VScroll>
        <Watermark>
          <WatermarkTitle><Text w={157}>Activate Windows</Text></WatermarkTitle>
          <WatermarkNote><Text w={235}>Go to Settings to activate Windows.</Text></WatermarkNote>
        </Watermark>
      </SheetArea>

      <SheetTabs>
        <SheetNav>
          <NavArrow d="M0 0h1.300v7H0zM6 0v7L2 3.500z" />
          <NavArrow d="M5 0v7L1 3.500z" />
          <NavArrow d="M1 0v7l4-3.500z" />
          <NavArrow d="M0 0v7l4-3.500zM4.700 0H6v7H4.700z" />
        </SheetNav>
        <TabDrawing>
          <TabShape width="130" height="16" viewBox="0 0 130 16">
            <path d="M92.500.500h32.500l-14 14.500H82z" fill="#e7eaf0" />
            <path d="M125 1l-14 14.500" stroke="#8a9098" fill="none" />
            <path d="M.5 0h93L80 13.500q-1.500 1.500-3.500 1.500H3Q.5 15 .5 12z" fill="#fff" />
            <path d="M.5 1v14H77q2 0 3.500-1.500L93.500 1" fill="none" stroke="#a5abb3" />
            <path d="M93.500.500H130" stroke="#8a9098" />
            <path d="M96.500 3.500h10.500v7l-3 3h-5.500v-7" fill="#eef3fc" stroke="#5577b5" />
            <path d="M107 10l-3 3.500v-3z" fill="#a9c2ea" stroke="#5577b5" strokeWidth=".6" />
            <path d="M97.500 2v8M93.500 6h8M94.700 3.200l5.600 5.600M100.300 3.200l-5.600 5.600" stroke="#e79a26" strokeWidth="1.100" />
            <circle cx="97.500" cy="6" r="1.300" fill="#fff6c9" />
          </TabShape>
          <TabLabel><Text w={66}>Worksheet</Text></TabLabel>
        </TabDrawing>
        <HSplit><ThinLine $h={8} /></HSplit>
        <ScrollButton $h={15} $w={15}><Icon width="5" height="9" viewBox="0 0 5 9"><path d="M5 0v9L0 4.500z" fill="#444a53" /></Icon></ScrollButton>
        <Spacer $w={2} />
        <HThumb><Icon width="7" height="7" viewBox="0 0 7 7"><path d="M.5 0v7M2.500 0v7M4.500 0v7M6.500 0v7" stroke="#7b818a" /></Icon></HThumb>
        <Spacer $w={28} />
        <ScrollButton $h={15} $w={17}><Icon width="5" height="9" viewBox="0 0 5 9"><path d="M0 0v9l5-4.500z" fill="#444a53" /></Icon></ScrollButton>
        <HSplit><ThinLine $h={8} /></HSplit>
      </SheetTabs>

      <StatusBar>
        <ReadyBox><Text w={31}>Ready</Text></ReadyBox>
        <Spacer />
        <ThinLine $h={20} $c="#8f949b" /><Spacer $w={4} />
        <StatusItems>
          <ViewButton $on><Icon width="13" height="11" viewBox="0 0 13 11"><path d="M.5.500h12v10H.5zM4.500.500v10M8.500.500v10M.5 3.500h12M.5 7.500h12" fill="#fff" stroke="#6b6348" /></Icon></ViewButton>
          <ViewButton><Icon width="13" height="12" viewBox="0 0 13 12"><path d="M.5.500h12v11H.5z" fill="#9a9fa6" stroke="#555b63" /><path d="M3.500 2.500h6v7h-6z" fill="#fff" stroke="#555b63" /><path d="M5 4.500h3M5 6.500h3" stroke="#777" /></Icon></ViewButton>
          <ViewButton><Icon width="14" height="12" viewBox="0 0 14 12"><path d="M.5.500h13v11H.5z" fill="#9a9fa6" stroke="#6b7078" /><path d="M1 1h3.500v6H1zM5.500 1H9v6H5.500z" fill="#fff" stroke="#555b63" strokeWidth=".8" /></Icon></ViewButton>
          <Spacer $w={9} />
          <Text w={27}>100%</Text>
          <Spacer $w={7} />
          <Icon width="134" height="18" viewBox="0 0 134 18">
            <path d="M17 9.500h102" stroke="#8a8f97" /><path d="M17 10.500h102" stroke="#eceef0" />
            <g fill="#f2f3f5" stroke="#6f757e" strokeWidth="1.200"><circle cx="9" cy="9.500" r="7.300" /><circle cx="125" cy="9.500" r="7.300" /></g>
            <path d="M5.500 9.500h7M121.500 9.500h7M125 6v7" stroke="#50555d" strokeWidth="1.600" />
            <path d="M63.500 3.500h8v7l-4 4-4-4z" fill="#f6f7f9" stroke="#6f757e" />
          </Icon>
        </StatusItems>
      </StatusBar>

      <Taskbar>
        <StartButton>
          <Icon width="16" height="16" viewBox="0 0 16 16"><path d="M0 2.300L6.500 1.400v6.200H0zM7.300 1.300L16 0v7.600H7.300zM0 8.400h6.500v6.200L0 13.700zM7.300 8.400H16V16l-8.700-1.300z" fill="#fff" /></Icon>
        </StartButton>
        <SearchBox>
          <Icon width="16" height="16" viewBox="0 0 16 16"><circle cx="10.200" cy="5.800" r="5" fill="none" stroke="#222" strokeWidth="1.300" /><path d="M6.500 9.500L.5 15.500" stroke="#222" strokeWidth="1.300" /></Icon>
          <Text w={128}>Type here to search</Text>
        </SearchBox>
        <TaskItem $nudge={1}><Icon width="16" height="16" viewBox="0 0 16 16"><circle cx="8" cy="8" r="6.800" fill="none" stroke="#fff" strokeWidth="1.900" /></Icon></TaskItem>
        <TaskItem $nudge={3}><Icon width="16" height="15" viewBox="0 0 16 15"><path d="M.5 0v2.500h10V0M.5 4.500h10v6H.5zM.5 15v-2.500h10V15M14.500 0v2M14.500 8v7" fill="none" stroke="#eee" /><path d="M13 3.500h3v3h-3z" fill="#fff" /></Icon></TaskItem>
        <TaskItem><EdgeIcon /></TaskItem>
        <TaskItem $open><FolderIcon /></TaskItem>
        <TaskItem><StoreIcon /></TaskItem>
        <TaskItem><SublimeIcon /></TaskItem>
        <TaskItem><MailIcon /></TaskItem>
        <TaskItem $nudge={1}><OfficeIcon letter="W" color="#1d55ad" tint="#bcd5f3" /></TaskItem>
        <TaskItem $open><ChromeIcon /></TaskItem>
        <TaskItem $active><OfficeIcon letter="X" color="#2b8b35" tint="#c8e8c0" /></TaskItem>
        <Tray>
          <Spacer $w={2} />
          <Icon width="12" height="7" viewBox="0 0 12 7"><path d="M.7 6.300L6 1l5.300 5.300" fill="none" stroke="#fff" strokeWidth="1.400" /></Icon>
          <Spacer $w={13} />
          <Icon width="13" height="13" viewBox="0 0 13 13">
            <path d="M1 12A11 11 0 0 1 12 1" fill="none" stroke="#777" strokeWidth="1.200" />
            <path d="M4 12a8 8 0 0 1 8-8M7 12a5 5 0 0 1 5-5" fill="none" stroke="#ddd" strokeWidth="1.300" />
            <circle cx="11" cy="11.300" r="1.500" fill="#fff" />
          </Icon>
          <Spacer $w={8} />
          <Icon width="17" height="13" viewBox="0 0 17 13">
            <path d="M4.500 4.500h10v7h-10z" fill="none" stroke="#fff" /><path d="M6 6h5.500v4H6zM15 6.500h1.500v3H15z" fill="#fff" />
            <path d="M1.500 0v3M4.500 0v3M.5 3h5v2.500H3V8" fill="none" stroke="#fff" />
          </Icon>
          <Spacer $w={7} />
          <Icon width="17" height="13" viewBox="0 0 17 13">
            <path d="M.5 4.500H3l3.500-3.500v11L3 8.500H.5z" fill="none" stroke="#fff" />
            <path d="M8.500 4.500q1.500 2 0 4M10.700 2.800q3 3.700 0 7.400" fill="none" stroke="#fff" /><path d="M13 1q4.500 5.500 0 11" fill="none" stroke="#777" />
          </Icon>
          <Spacer $w={11} /><Text w={20}>IND</Text><Spacer $w={12} />
          <Clock><Text w={28}>21.11</Text><Text w={59}>24/11/2019</Text></Clock>
          <Spacer $w={18} />
          <Icon width="27" height="24" viewBox="0 0 27 24">
            <path d="M0 0h16v12H8l-4 4v-4H0z" fill="#fff" />
            <path d="M3 3.500h10M3 6.500h10M3 9.500h6" stroke="#1c1c27" />
            <circle cx="15.500" cy="15.500" r="9.500" fill="#3e3e48" stroke="#777780" />
            <text x="15.500" y="19.500" textAnchor="middle" fontFamily="Open Sans, sans-serif" fontWeight="700" fontSize="11" fill="#fff">24</text>
          </Icon>
          <ShowDesktop />
        </Tray>
      </Taskbar>
    </Screen>
  );
}
